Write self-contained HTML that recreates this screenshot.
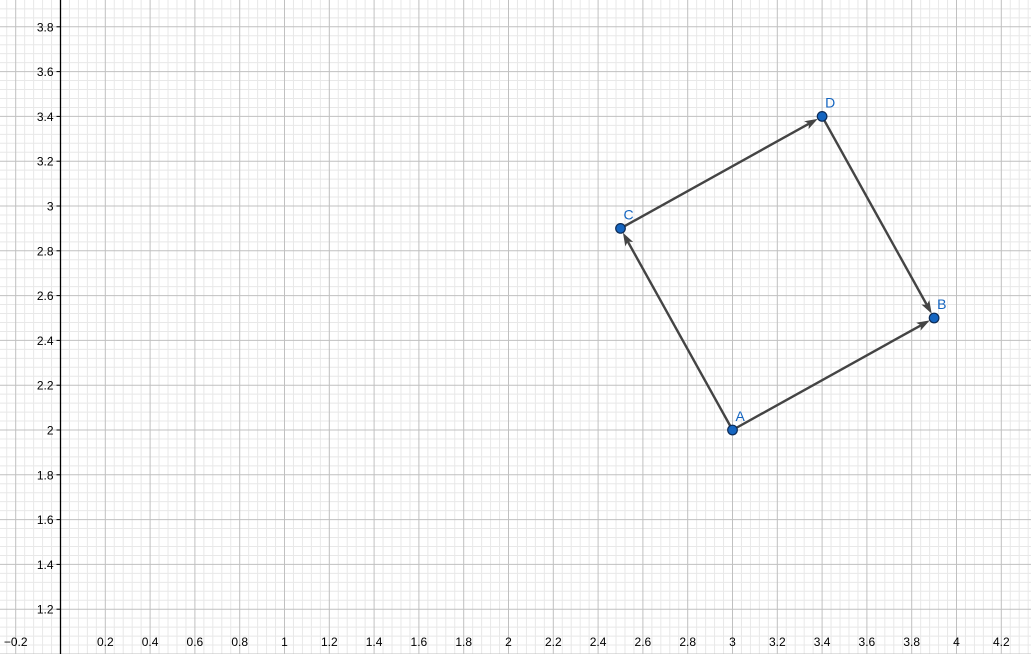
<!DOCTYPE html>
<html><head><meta charset="utf-8">
<style>html,body{margin:0;padding:0;background:#fff;overflow:hidden}svg{display:block}</style>
</head><body>
<svg id="s" width="1031" height="654" xmlns="http://www.w3.org/2000/svg" font-family="Liberation Sans, sans-serif" font-size="12"></svg>
<script>
const s=document.getElementById('s');
const U=224,X0=60.5;
const X=v=>X0+v*U, Y=v=>430-(v-2)*U;
let h='';
for(let i=-10;i<=130;i++){const x=X(i*0.04);if(x<0||x>1031)continue; if(i%5)h+=`<line x1="${x}" y1="0" x2="${x}" y2="654" stroke="#e8e8e8" stroke-width="1"/>`;}
for(let i=0;i<=130;i++){const y=Y(i*0.04);if(y<0||y>654)continue; if(i%5)h+=`<line x1="0" y1="${y}" x2="1031" y2="${y}" stroke="#e8e8e8" stroke-width="1"/>`;}
for(let i=-1;i<=25;i++){const x=X(i*0.2);if(x<0||x>1031)continue;h+=`<line x1="${x}" y1="0" x2="${x}" y2="654" stroke="#c0c0c0" stroke-width="1"/>`;}
for(let i=0;i<=25;i++){const y=Y(i*0.2);if(y<0||y>654)continue;h+=`<line x1="0" y1="${y}" x2="1031" y2="${y}" stroke="#c0c0c0" stroke-width="1"/>`;}
h+=`<line x1="${X0}" y1="0" x2="${X0}" y2="654" stroke="#000" stroke-width="1.3"/>`;
const fmt=v=>{let t=(Math.round(v*10)/10).toString();return t.replace('-','\u2212');};
for(let i=6;i<=19;i++){const v=i*0.2,y=Y(v);h+=`<line x1="${X0-4}" y1="${y}" x2="${X0}" y2="${y}" stroke="#000"/>`;h+=`<text x="${X0-7}" y="${y+4.5}" text-anchor="end" fill="#000">${fmt(v)}</text>`;}
for(let i=-1;i<=21;i++){if(i==0)continue;const v=i*0.2,x=X(v);h+=`<text x="${x}" y="646" text-anchor="middle" fill="#000">${fmt(v)}</text>`;}
function vec(a,b){const [x1,y1]=a,[x2,y2]=b;const dx=x2-x1,dy=y2-y1,L=Math.hypot(dx,dy),ux=dx/L,uy=dy/L;
 const r=5,tx=x2-ux*r,ty=y2-uy*r,bl=13,bw=4.5;const bx=tx-ux*bl,by=ty-uy*bl;
 h+=`<line x1="${x1}" y1="${y1}" x2="${bx+ux*3}" y2="${by+uy*3}" stroke="#444" stroke-width="2.4"/>`;
 h+=`<polygon points="${tx},${ty} ${bx-uy*bw},${by+ux*bw} ${bx+ux*3},${by+uy*3} ${bx+uy*bw},${by-ux*bw}" fill="#444"/>`;}
const A=[X(3),Y(2)],B=[X(3.9),Y(2.5)],C=[X(2.5),Y(2.9)],D=[X(3.4),Y(3.4)];
vec(A,B);vec(A,C);vec(C,D);vec(D,B);
for(const [p,l] of [[A,'A'],[B,'B'],[C,'C'],[D,'D']]){h+=`<circle cx="${p[0]}" cy="${p[1]}" r="4.8" fill="#1565c0" stroke="#0d2b55" stroke-width="1.2"/>`;h+=`<text x="${p[0]+3}" y="${p[1]-9}" fill="#1565c0" font-size="14">${l}</text>`;}
s.innerHTML=h;
</script>
</body></html>
